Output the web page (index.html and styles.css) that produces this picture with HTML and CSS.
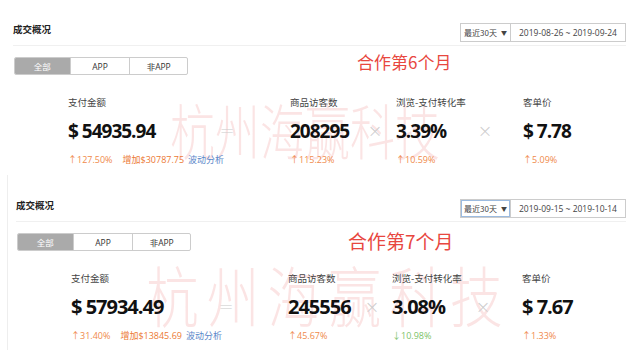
FILE: index.html
```html
<!DOCTYPE html>
<html lang="zh-CN">
<head>
    <meta charset="UTF-8">
    <meta name="viewport" content="width=device-width, initial-scale=1.0">
    <title>成交概况</title>
    <link rel="stylesheet" href="styles.css">
</head>
<body>
    <div class="panel">
        <div class="panel-head">
            <h3 class="titulo">成交概况</h3>
            <div class="date-picker">
                <span class="range-select">最近30天 <i class="caret">▼</i></span>
                <span class="range-text">2019-08-26 ~ 2019-09-24</span>
            </div>
        </div>
        <div class="tab-row">
            <div class="tabs">
                <span class="tab active">全部</span>
                <span class="tab">APP</span>
                <span class="tab">非APP</span>
            </div>
            <span class="note">合作第6个月</span>
        </div>
        <div class="metrics">
            <div class="metric">
                <p class="label">支付金额</p>
                <p class="value">$ 54935.94</p>
                <p class="sub"><span class="up">↑127.50%</span><span class="inc">增加$30787.75</span><span class="link">波动分析</span></p>
            </div>
            <span class="op">=</span>
            <div class="metric m-visitors">
                <p class="label">商品访客数</p>
                <p class="value">208295</p>
                <p class="sub"><span class="up">↑115.23%</span></p>
            </div>
            <span class="op">×</span>
            <div class="metric m-rate">
                <p class="label">浏览-支付转化率</p>
                <p class="value">3.39%</p>
                <p class="sub"><span class="up">↑10.59%</span></p>
            </div>
            <span class="op">×</span>
            <div class="metric m-price">
                <p class="label">客单价</p>
                <p class="value">$ 7.78</p>
                <p class="sub"><span class="up">↑5.09%</span></p>
            </div>
        </div>
        <div class="watermark">杭州海赢科技</div>
    </div>

    <div class="panel panel-2">
        <div class="panel-head">
            <h3 class="titulo">成交概况</h3>
            <div class="date-picker">
                <span class="range-select focused">最近30天 <i class="caret">▼</i></span>
                <span class="range-text">2019-09-15 ~ 2019-10-14</span>
            </div>
        </div>
        <div class="tab-row">
            <div class="tabs">
                <span class="tab active">全部</span>
                <span class="tab">APP</span>
                <span class="tab">非APP</span>
            </div>
            <span class="note">合作第7个月</span>
        </div>
        <div class="metrics">
            <div class="metric">
                <p class="label">支付金额</p>
                <p class="value">$ 57934.49</p>
                <p class="sub"><span class="up">↑31.40%</span><span class="inc">增加$13845.69</span><span class="link">波动分析</span></p>
            </div>
            <span class="op">=</span>
            <div class="metric m-visitors">
                <p class="label">商品访客数</p>
                <p class="value">245556</p>
                <p class="sub"><span class="up">↑45.67%</span></p>
            </div>
            <span class="op">×</span>
            <div class="metric m-rate">
                <p class="label">浏览-支付转化率</p>
                <p class="value">3.08%</p>
                <p class="sub"><span class="down">↓10.98%</span></p>
            </div>
            <span class="op">×</span>
            <div class="metric m-price">
                <p class="label">客单价</p>
                <p class="value">$ 7.67</p>
                <p class="sub"><span class="up">↑1.33%</span></p>
            </div>
        </div>
        <div class="watermark">杭州海赢科技</div>
    </div>
</body>
</html>
```

FILE: styles.css
```css
body {
    font-family: "Noto Sans CJK SC", sans-serif;
    background-color: #ffffff;
    color: #333333;
    margin: 0;
    padding: 0;
    width: 640px;
    height: 360px;
    overflow: hidden;
}
.panel {
    position: relative;
    height: 175px;
    padding: 22px 14px 0 13px;
    box-sizing: border-box;
}
.panel-2 {
    margin-left: 7px;
    padding-left: 8px;
    padding-top: 23px;
    border-left: 1px solid #eeeeee;
}
.panel-head {
    display: flex;
    justify-content: space-between;
    align-items: flex-start;
    height: 20px;
    padding-bottom: 3px;
    border-bottom: 1px solid #f0f0f0;
}
.titulo {
    margin: 0;
    font-size: 9.5px;
    line-height: 14px;
    font-weight: bold;
    color: #222222;
}
.date-picker {
    display: flex;
    height: 19px;
    margin-top: 1px;
    border: 1px solid #cccccc;
    box-sizing: border-box;
    font-size: 8px;
    color: #444444;
}
.range-select {
    width: 49px;
    display: flex;
    align-items: center;
    justify-content: center;
    gap: 4px;
    border-right: 1px solid #cccccc;
}
.range-select.focused {
    box-shadow: inset 0 0 0 1px #9cbbe0;
}
.caret {
    font-style: normal;
    font-size: 6px;
}
.range-text {
    width: 114px;
    display: flex;
    align-items: center;
    justify-content: center;
    font-family: "Open Sans", sans-serif;
    font-size: 8.5px;
}
.tab-row {
    display: flex;
    align-items: center;
    height: 18px;
    margin-top: 11px;
}
.tabs {
    display: flex;
    width: 174px;
    height: 18px;
    margin-left: 1px;
    border: 1px solid #cccccc;
    border-radius: 2px;
    box-sizing: border-box;
    overflow: hidden;
    font-size: 8.5px;
    font-family: "Open Sans", "Noto Sans CJK SC", sans-serif;
}
.tab {
    display: flex;
    align-items: center;
    justify-content: center;
    width: 60px;
    color: #333333;
    border-left: 1px solid #cccccc;
}
.tab:first-child {
    width: 56px;
    border-left: none;
}
.tab:last-child {
    width: 58px;
}
.tab.active {
    background-color: #aaaaaa;
    color: #ffffff;
}
.note {
    margin-left: 169px;
    margin-bottom: 8px;
    font-size: 17px;
    line-height: 20px;
    color: #e8473f;
}
.panel-2 .note {
    margin-left: 157px;
    margin-bottom: 2px;
    font-size: 19px;
    line-height: 22px;
}
.metrics {
    display: grid;
    grid-template-columns: 149px 20px 128px 20px 90px 20px auto;
    margin-top: 20px;
    padding-left: 55px;
    position: relative;
    z-index: 1;
}
.panel-2 .metrics {
    grid-template-columns: 145px 20px 126px 20px 91px 20px auto;
}
.metric p {
    margin: 0;
    white-space: nowrap;
}
.m-visitors {
    padding-left: 53px;
}
.m-rate {
    padding-left: 11px;
}
.m-price {
    padding-left: 28px;
}
.panel-2 .m-visitors {
    padding-left: 52px;
}
.panel-2 .m-rate {
    padding-left: 10px;
}
.panel-2 .m-price {
    padding-left: 29px;
}
.label {
    font-size: 9.5px;
    line-height: 14px;
    color: #444444;
}
.value {
    margin-top: 9px !important;
    font-family: "Open Sans", sans-serif;
    font-size: 19px;
    line-height: 26px;
    font-weight: bold;
    letter-spacing: -1px;
    color: #111111;
}
.panel-2 .value {
    font-size: 20px;
}
.sub {
    margin-top: 10px !important;
    font-family: "Open Sans", "Noto Sans CJK SC", sans-serif;
    font-size: 9px;
    line-height: 12px;
}
.up {
    color: #f08a4b;
}
.down {
    color: #7cc36a;
}
.inc {
    margin-left: 10px;
    color: #ec7a35;
}
.link {
    margin-left: 4px;
    color: #5b87c9;
}
.op {
    padding-top: 26px;
    font-family: "DejaVu Sans", sans-serif;
    font-size: 18px;
    line-height: 20px;
    font-weight: 300;
    text-align: center;
    color: #cccccc;
}
.watermark {
    position: absolute;
    left: 170px;
    top: 96px;
    font-size: 60px;
    line-height: 66px;
    font-weight: 300;
    white-space: nowrap;
    color: rgba(225, 50, 50, 0.13);
    transform: scaleX(0.75);
    transform-origin: left top;
    pointer-events: none;
}
.panel-2 .watermark {
    left: 138px;
    top: 82px;
    font-size: 66px;
    line-height: 72px;
    letter-spacing: 10px;
    transform: scaleX(0.8);
}
```
